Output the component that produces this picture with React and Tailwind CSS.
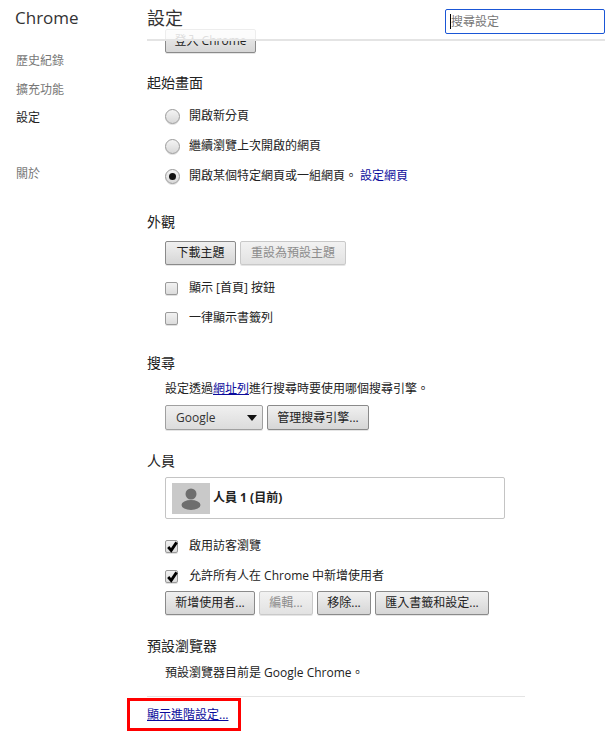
const FONT = "font-['Open_Sans','Noto_Sans_CJK_TC',sans-serif]";

function Btn({ children, disabled, className = "" }) {
  return (
    <button
      className={`h-[24px] rounded-[2px] border text-[12px] leading-none whitespace-nowrap shadow-[0_1px_0_rgba(0,0,0,0.1)] bg-gradient-to-b ${
        disabled
          ? "border-[#c9c9c9] from-[#f2f2f2] to-[#e2e2e2] text-[#8c8c8c]"
          : "border-[#8a8a8a] from-[#f0f0f0] to-[#d6d6d6] text-[#222]"
      } ${className}`}
    >
      {children}
    </button>
  );
}

function Radio({ checked }) {
  return (
    <span className="w-[15px] h-[15px] rounded-full border border-[#9a9a9a] bg-gradient-to-b from-[#f4f4f4] to-[#d8d8d8] flex items-center justify-center shrink-0 shadow-[0_1px_0_rgba(0,0,0,0.12)]">
      {checked && <span className="w-[7px] h-[7px] rounded-full bg-[#111]" />}
    </span>
  );
}

function Check({ checked }) {
  return (
    <span className="relative w-[13px] h-[13px] rounded-[2px] border border-[#9a9a9a] bg-gradient-to-b from-[#f2f2f2] to-[#dcdcdc] shrink-0 shadow-[0_1px_0_rgba(0,0,0,0.12)]">
      {checked && (
        <svg viewBox="0 0 13 13" className="absolute left-[0px] top-[-1px] w-[13px] h-[13px]">
          <path d="M2.2 7 L5.2 10.4 L10.6 2.4" fill="none" stroke="#000" strokeWidth="2.8" />
        </svg>
      )}
    </span>
  );
}

function Option({ control, children, className = "" }) {
  return (
    <div className={`flex items-center h-[30px] text-[12px] text-[#222] ${className}`}>
      <span className="w-[24px] flex items-center">{control}</span>
      <span>{children}</span>
    </div>
  );
}

function Section({ title, className = "", children }) {
  return (
    <section className={className}>
      <h3 className="text-[14px] leading-[20px] text-[#222] font-normal">{title}</h3>
      <div className="pl-[18px]">{children}</div>
    </section>
  );
}

function NavItem({ children, active, className = "h-[29px]" }) {
  return (
    <div className={`leading-[29px] text-[12px] ${className} ${active ? "text-[#222]" : "text-[#777]"}`}>{children}</div>
  );
}

export default function App() {
  return (
    <div className={`${FONT} relative flex w-[616px] h-[736px] overflow-hidden bg-white`}>
      <aside className="w-[147px] shrink-0 pl-[15px]">
        <div className="h-[40px] pt-[5px] text-[17px] leading-[26px] text-[#333]">Chrome</div>
        <nav className="mt-[6px] pl-[1px]">
          <NavItem>歷史紀錄</NavItem>
          <NavItem className="h-[28px]">擴充功能</NavItem>
          <NavItem active>設定</NavItem>
          <div className="h-[27px]" />
          <NavItem>關於</NavItem>
        </nav>
      </aside>

      <main className="relative w-[458px] shrink-0 pt-[27px]">
        <header className="absolute left-0 top-0 right-0 h-[41px] bg-white/85 border-b-2 border-[#e4e4e4] flex items-start justify-between">
          <h1 className="text-[18px] leading-[26px] pt-[5px] font-normal text-[#333]">設定</h1>
          <div className="mt-[9px] w-[160px] h-[25px] rounded-[2px] border border-[#1a56d6] bg-white pl-[4px] flex items-center text-[12px] text-[#777]">
            <span className="w-[1px] h-[15px] bg-black" />
            <span>搜尋設定</span>
          </div>
        </header>

        <div className="pl-[18px]">
          <Btn className="w-[91px]">登入 Chrome</Btn>
        </div>

        <Section title="起始畫面" className="mt-[20px]">
          <div className="mt-[8px]">
            <Option control={<Radio />}>開啟新分頁</Option>
            <Option control={<Radio />}>繼續瀏覽上次開啟的網頁</Option>
            <Option control={<Radio checked />}>
              開啟某個特定網頁或一組網頁。
              <span className="ml-[3px] text-[#0b0b9c]">設定網頁</span>
            </Option>
          </div>
        </Section>

        <Section title="外觀" className="mt-[21px]">
          <div className="mt-[9px] flex gap-[4px]">
            <Btn className="w-[71px]">下載主題</Btn>
            <Btn disabled className="w-[106px]">重設為預設主題</Btn>
          </div>
          <div className="mt-[8px]">
            <Option control={<Check />}>顯示 [首頁] 按鈕</Option>
            <Option control={<Check />}>一律顯示書籤列</Option>
          </div>
        </Section>

        <Section title="搜尋" className="mt-[20px]">
          <p className="mt-[6px] text-[12px] leading-[20px] text-[#222]">
            設定透過<span className="text-[#0b0b9c] underline">網址列</span>進行搜尋時要使用哪個搜尋引擎。
          </p>
          <div className="mt-[6px] flex gap-[4px]">
            <button className="relative w-[98px] h-[25px] rounded-[2px] border border-[#a0a0a0] bg-gradient-to-b from-[#f0f0f0] to-[#dcdcdc] text-left pl-[10px] text-[12px] text-[#333] shadow-[0_1px_0_rgba(0,0,0,0.1)]">
              Google
              <span className="absolute right-[5px] top-[9px] w-0 h-0 border-l-[5px] border-r-[5px] border-t-[6px] border-l-transparent border-r-transparent border-t-[#111]" />
            </button>
            <Btn className="w-[102px] h-[25px]">管理搜尋引擎...</Btn>
          </div>
        </Section>

        <Section title="人員" className="mt-[21px]">
          <div className="mt-[6px] w-[340px] h-[42px] rounded-[2px] border border-[#c4c4c4] flex items-center pl-[6px]">
            <div className="w-[38px] h-[31px] bg-[#c9c9c9] flex items-center justify-center">
              <svg viewBox="0 0 38 31" className="w-[38px] h-[31px]">
                <circle cx="19" cy="11" r="5.5" fill="#6e6e6e" />
                <ellipse cx="19" cy="22" rx="9.5" ry="5" fill="#6e6e6e" />
              </svg>
            </div>
            <span className="ml-[3px] text-[12px] font-bold text-[#222]">人員 1 (目前)</span>
          </div>
          <div className="mt-[12px]">
            <Option control={<Check checked />}>啟用訪客瀏覽</Option>
            <Option control={<Check checked />}>允許所有人在 Chrome 中新增使用者</Option>
          </div>
          <div className="flex gap-[4px]">
            <Btn className="w-[90px]">新增使用者...</Btn>
            <Btn disabled className="w-[54px]">編輯...</Btn>
            <Btn className="w-[54px]">移除...</Btn>
            <Btn className="w-[114px]">匯入書籤和設定...</Btn>
          </div>
        </Section>

        <Section title="預設瀏覽器" className="mt-[21px]">
          <p className="mt-[7px] text-[12px] leading-[20px] text-[#222]">預設瀏覽器目前是 Google Chrome。</p>
        </Section>

        <div className="mt-[13px] w-[378px] border-t border-[#e4e4e4]" />

        <div className="relative mt-[9px] text-[12px] leading-[18px] text-[#0b0b9c]">
          <span className="underline">顯示進階設定...</span>
          <span className="absolute left-[-20px] top-[-8px] w-[114px] h-[33px] border-[3px] border-[#ff0000]" />
        </div>
      </main>
    </div>
  );
}
